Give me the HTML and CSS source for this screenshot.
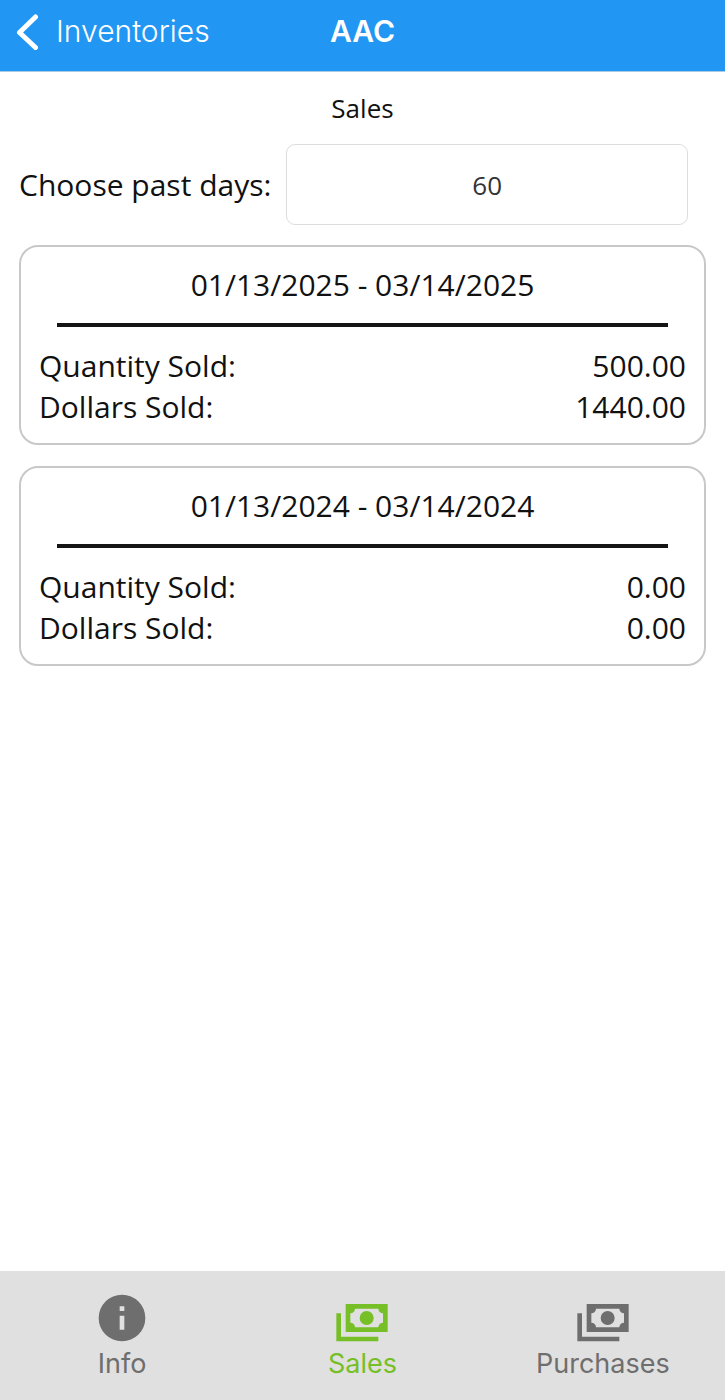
FILE: index.html
```html
<!DOCTYPE html>
<html lang="en">
<head>
    <meta charset="UTF-8">
    <meta name="viewport" content="width=device-width, initial-scale=1">
    <title>AAC</title>
    <link rel="stylesheet" href="styles.css">
</head>
<body>
<header class="navbar">
    <a class="back" href="#">
        <svg class="chevron" viewBox="0 0 22 36"><path d="M19.500 3L3.500 18.500L19.500 33.500"/></svg>
        <span>Inventories</span>
    </a>
    <h1>AAC</h1>
</header>

<main class="content">
    <h2>Sales</h2>
    <div class="filter">
        <label for="days">Choose past days:</label>
        <input type="text" id="days" inputmode="numeric" value="60">
    </div>

    <section class="card">
        <h3>01/13/2025 - 03/14/2025</h3>
        <hr>
        <dl>
            <dt>Quantity Sold:</dt>
            <dd>500.00</dd>
            <dt>Dollars Sold:</dt>
            <dd>1440.00</dd>
        </dl>
    </section>

    <section class="card">
        <h3>01/13/2024 - 03/14/2024</h3>
        <hr>
        <dl>
            <dt>Quantity Sold:</dt>
            <dd>0.00</dd>
            <dt>Dollars Sold:</dt>
            <dd>0.00</dd>
        </dl>
    </section>
</main>

<nav class="tabs">
    <a class="tab" href="#">
        <svg viewBox="0 0 24 24"><path d="M13,9H11V7H13M13,17H11V11H13M12,2A10,10 0 0,0 2,12A10,10 0 0,0 12,22A10,10 0 0,0 22,12A10,10 0 0,0 12,2Z"/></svg>
        <span>Info</span>
    </a>
    <a class="tab current" href="#">
        <svg viewBox="0 0 24 24"><path d="M5,6H23V18H5V6M14,9A3,3 0 0,1 17,12A3,3 0 0,1 14,15A3,3 0 0,1 11,12A3,3 0 0,1 14,9M9,8A2,2 0 0,1 7,10V14A2,2 0 0,1 9,16H19A2,2 0 0,1 21,14V10A2,2 0 0,1 19,8H9M1,10H3V20H19V22H1V10Z"/></svg>
        <span>Sales</span>
    </a>
    <a class="tab" href="#">
        <svg viewBox="0 0 24 24"><path d="M5,6H23V18H5V6M14,9A3,3 0 0,1 17,12A3,3 0 0,1 14,15A3,3 0 0,1 11,12A3,3 0 0,1 14,9M9,8A2,2 0 0,1 7,10V14A2,2 0 0,1 9,16H19A2,2 0 0,1 21,14V10A2,2 0 0,1 19,8H9M1,10H3V20H19V22H1V10Z"/></svg>
        <span>Purchases</span>
    </a>
</nav>
</body>
</html>
```

FILE: styles.css
```css
* {
    padding: 0;
    margin: 0;
    box-sizing: border-box;
}

body {
    display: flex;
    flex-direction: column;
    min-height: 100vh;
    background: #fff;
    color: #111;
    font-family: "Open Sans", "Noto Sans", sans-serif;
    font-size: 30px;
    line-height: 41px;
}

a {
    text-decoration: none;
}

/* top bar */
.navbar {
    display: grid;
    grid-template-columns: 1fr auto 1fr;
    align-items: center;
    padding: 11px 16px 19px;
    background: #2196f3;
    border-bottom: 1px solid #a9c9e4;
    color: #fff;
    font-family: Inter, sans-serif;
}

.back {
    display: flex;
    align-items: center;
    gap: 18px;
    color: #fff;
    font-weight: 300;
}

.chevron {
    width: 22px;
    height: 36px;
    fill: none;
    stroke: #fff;
    stroke-width: 5;
    stroke-linecap: round;
    stroke-linejoin: round;
}

.navbar h1 {
    font-size: 30px;
    font-weight: 600;
}

/* page */
.content {
    flex: 1;
    padding: 16px 19px;
}

.content h2 {
    font-size: 26px;
    font-weight: 400;
    text-align: center;
}

.filter {
    display: flex;
    align-items: center;
    gap: 15px;
    padding-right: 18px;
    margin: 15px 0 20px;
}

.filter input {
    flex: 1;
    min-width: 0;
    height: 81px;
    border: 1px solid #ddd;
    border-radius: 9px;
    background: #fff;
    color: #333;
    font-family: inherit;
    font-size: 26px;
    text-align: center;
}

.card {
    padding: 17px 18px 16px;
    margin-bottom: 21px;
    border: 2px solid #c8c8c8;
    border-radius: 19px;
}

.card h3 {
    font-size: 30px;
    font-weight: 400;
    text-align: center;
}

.card hr {
    height: 4px;
    margin: 18px;
    border: 0;
    background: #151515;
}

.card dl {
    display: grid;
    grid-template-columns: 1fr auto;
}

.card dd {
    text-align: right;
}

/* bottom tabs */
.tabs {
    display: grid;
    grid-template-columns: repeat(3, 1fr);
    padding: 19px 2px 18px;
    background: #e0e0e0;
    font-family: Inter, sans-serif;
    font-size: 27px;
    line-height: 36px;
}

.tab {
    display: flex;
    flex-direction: column;
    align-items: center;
    color: #6e6e6e;
}

.tab svg {
    width: 56px;
    height: 56px;
    fill: currentColor;
}

.tab.current {
    color: #76bf26;
}
```
